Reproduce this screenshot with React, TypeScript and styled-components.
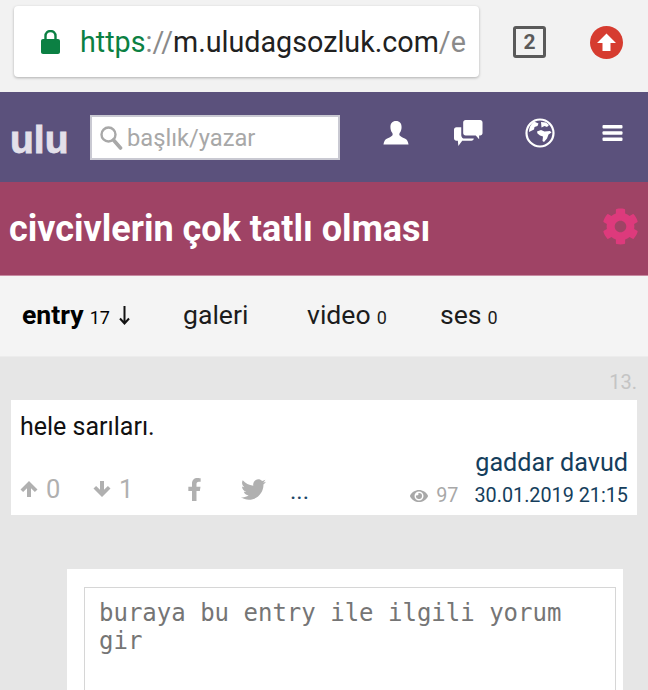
import React from "react";
import styled, { createGlobalStyle } from "styled-components";
import { FaCog, FaEye, FaFacebookF, FaTwitter } from "react-icons/fa";

const Global = createGlobalStyle`
  html, body { margin: 0; padding: 0; background: #e6e6e6; overflow: hidden; }
  body { font-family: Roboto, "Liberation Sans", sans-serif; }
  * { box-sizing: border-box; }
`;

const Page = styled.div`
  width: 648px;
  height: 690px;
  overflow: hidden;
  background: #e6e6e6;
`;

const BrowserBar = styled.div`
  height: 92px;
  background: #f2f2f2;
  padding: 6px 0 0 14px;
  display: flex;
  align-items: flex-start;
`;

const UrlBox = styled.div`
  width: 465px;
  height: 71px;
  background: #fff;
  border-radius: 4px;
  box-shadow: 0 1px 3px rgba(0, 0, 0, 0.28);
  display: flex;
  align-items: center;
  padding: 0 13px 0 27px;
`;

const Url = styled.div`
  margin-left: 20px;
  font-size: 28.7px;
  white-space: nowrap;
  overflow: hidden;
  color: #212121;
  flex: 1;
`;

const Green = styled.span`
  color: #0b8043;
`;

const Faded = styled.span`
  color: #8a8a8a;
`;

const TabCount = styled.div`
  margin: 20px 0 0 34px;
  width: 33px;
  height: 32px;
  border: 3px solid #5a5a5a;
  border-radius: 3px;
  color: #5a5a5a;
  font-size: 21px;
  font-weight: 700;
  display: flex;
  align-items: center;
  justify-content: center;
`;

const UpdateBadge = styled.div`
  margin: 20px 0 0 44px;
  width: 33px;
  height: 33px;
  display: flex;
`;

const Header = styled.header`
  height: 89px;
  background: #5b517c;
  display: flex;
  align-items: flex-start;
  padding: 23px 0 0 10px;
`;

const Logo = styled.div`
  width: 80px;
  margin-top: 5px;
  color: #e3e0ea;
  font-family: "Liberation Sans", Arial, sans-serif;
  font-size: 39px;
  line-height: 40px;
  font-weight: 700;
  -webkit-text-stroke: 0.8px #e3e0ea;
`;

const Search = styled.div`
  width: 250px;
  height: 45px;
  background: #fff;
  border: 2px solid #c9c9d2;
  display: flex;
  align-items: center;
  padding: 0 0 0 7px;
  gap: 4px;
  color: #a8a8a8;
  font-size: 23.7px;
`;

const NavIcon = styled.div<{ $left: number }>`
  margin-left: ${(p) => p.$left}px;
  margin-top: 2px;
  display: flex;
  width: 32px;
  height: 32px;
  justify-content: center;
  align-items: center;
`;

const TitleBar = styled.div`
  height: 95px;
  background: #9f4365;
  border-top: 1px solid #5b517c;
  border-bottom: 1px solid #c78aa1;
  display: flex;
  align-items: center;
  justify-content: space-between;
  padding: 0 9px 0 9px;
`;

const Title = styled.h1`
  margin: 0;
  color: #fff;
  font-size: 36px;
  font-weight: 700;
`;

const Gear = styled(FaCog)`
  margin-bottom: 5px;
`;

const Tabs = styled.nav`
  height: 81px;
  background: #f4f4f4;
  display: flex;
  align-items: center;
  padding: 0 0 3px 22px;
  border-bottom: 1px solid #ececec;
`;

const Tab = styled.div<{ $width: number; $active?: boolean }>`
  width: ${(p) => p.$width}px;
  font-size: 26.6px;
  font-weight: ${(p) => (p.$active ? 700 : 400)};
  color: ${(p) => (p.$active ? "#000" : "#1c1c1c")};
  white-space: nowrap;
  display: flex;
  align-items: baseline;
`;

const Count = styled.span`
  font-size: 18px;
  font-weight: 400;
  margin-left: 6px;
`;

const SortArrow = styled.svg`
  margin-left: 9px;
  align-self: center;
`;

const EntryNumber = styled.div`
  text-align: right;
  padding: 13px 11px 0 0;
  height: 43px;
  color: #c4c4c4;
  font-size: 20px;
`;

const Card = styled.article`
  margin: 0 11px;
  height: 115px;
  background: #fff;
  padding: 12px 9px 0;
`;

const EntryText = styled.div`
  font-size: 25px;
  line-height: 30px;
  color: #111;
`;

const Footer = styled.div`
  display: flex;
  justify-content: space-between;
  align-items: flex-end;
  margin-top: 6px;
`;

const Actions = styled.div`
  display: flex;
  align-items: center;
  color: #b0b0b0;
  font-size: 25.5px;
  height: 32px;
  margin-bottom: 5px;
`;

const Vote = styled.span<{ $width: number }>`
  width: ${(p) => p.$width}px;
  display: flex;
  align-items: center;
  gap: 8px;
`;

const Social = styled.span<{ $width: number }>`
  width: ${(p) => p.$width}px;
  display: flex;
  align-items: center;
`;

const More = styled.span`
  color: #1d4768;
  font-size: 24px;
  margin-top: 4px;
`;

const Meta = styled.div`
  text-align: right;
  color: #153e5c;
`;

const Author = styled.div`
  font-size: 25.2px;
  line-height: 30px;
`;

const Stamp = styled.div`
  display: flex;
  justify-content: flex-end;
  align-items: center;
  font-size: 19.8px;
  line-height: 28px;
  margin-top: 4px;
`;

const Views = styled.span`
  color: #a8a8a8;
  display: flex;
  align-items: center;
  gap: 8px;
  margin-right: 16px;
`;

const Composer = styled.section`
  margin: 54px 25px 0 67px;
  background: #fff;
  padding: 18px 7px 0 17px;
  height: 140px;
`;

const Field = styled.div`
  height: 140px;
  border: 1px solid #d6d6d6;
  padding: 11px 14px;
  font-family: "DejaVu Sans Mono", "Liberation Mono", monospace;
  font-size: 24px;
  line-height: 28px;
  color: #757575;
`;

const LockIcon = () => (
  <svg width="19" height="24" viewBox="0 0 19 24" fill="#0b8043">
    <path d="M2 9h15c1.100 0 2 .9 2 2v11c0 1.100-.9 2-2 2H2c-1.100 0-2-.9-2-2V11c0-1.100.9-2 2-2z" />
    <path d="M4.500 10V6a5 5 0 0 1 10 0v4" fill="none" stroke="#0b8043" strokeWidth="2.400" />
  </svg>
);

const UserIcon = () => (
  <svg width="26" height="26" viewBox="0 0 28 28" fill="#fff">
    <path d="M14 1c-4 0-6 2.700-6 6.500 0 2.500.7 4.700 1.900 6.300.6.900.7 2.200.1 3-.9 1.300-3.700 2.300-6 3.400C2.200 21.100 1 23 .5 26.500h27c-.5-3.500-1.700-5.400-3.500-6.300-2.300-1.100-5.100-2.100-6-3.400-.6-.8-.5-2.100.1-3C19.300 12.200 20 10 20 7.500 20 3.700 18 1 14 1z" />
  </svg>
);

const ChatIcon = () => (
  <svg width="31" height="29" viewBox="0 0 32 30" fill="#fff">
    <path d="M10.500 3.500c0-1.400 1-2.500 2.500-2.500h15c1.500 0 2.500 1.100 2.500 2.500v11c0 1.400-1 2.500-2.500 2.500h-1v4l-3.500-4H13c-1.500 0-2.500-1.100-2.500-2.500z" />
    <path d="M8.500 8.500H3.500C2 8.500 1 9.600 1 11v9c0 1.400 1 2.500 2.500 2.500h1.500L5.500 28l4-5.500H19c1.500 0 2.300-1 2.500-2.300H12c-2 0-3.500-1.500-3.500-3.500z" />
  </svg>
);

const GlobeIcon = () => (
  <svg width="30" height="30" viewBox="0 0 30 30">
    <circle cx="15" cy="15" r="13.500" fill="none" stroke="#fff" strokeWidth="2.200" />
    <path
      fill="#fff"
      d="M9 3.500l4.500 2-1 2.500-3 1-.5 2.500L6 13l-2 1c0-4 1.500-8 5-10.500zM12 13.500l4-1.500 3.500 1.500 5.500-.5 1.500 1.500-3 2-1.500 4-3 3.500-1.500-1 .5-4.500-3-1-2.500-2zM16 4l5 .5 3 2.500-2 2-2.500-1-3 1.500z"
    />
  </svg>
);

const MenuIcon = () => (
  <svg width="21" height="18" viewBox="0 0 21 18" fill="#fff">
    <rect x="0.500" y="1" width="20" height="3.400" rx="1" />
    <rect x="0.500" y="7.300" width="20" height="3.400" rx="1" />
    <rect x="0.500" y="13.600" width="20" height="3.400" rx="1" />
  </svg>
);

const SearchIcon = () => (
  <svg width="24" height="26" viewBox="0 0 24 26" fill="none" stroke="#a8a8a8">
    <circle cx="9.500" cy="9.500" r="7" strokeWidth="2.400" />
    <path d="M14.500 15l7 8" strokeWidth="3.600" strokeLinecap="round" />
  </svg>
);

const UpdateIcon = () => (
  <svg width="33" height="33" viewBox="0 0 33 33">
    <circle cx="16.500" cy="16.500" r="16.500" fill="#d63c30" />
    <path fill="#fff" d="M16.500 7.500L26 17h-5.500v8h-8v-8H7z" />
  </svg>
);

const UpArrow = () => (
  <svg width="18" height="18" viewBox="0 0 18 18" fill="#b0b0b0">
    <path d="M9 1l8.500 8.500-2.600 2.600-3.900-3.900V17H7V8.200l-3.900 3.900L.5 9.500z" />
  </svg>
);

const DownArrow = () => (
  <svg width="18" height="18" viewBox="0 0 18 18" fill="#b0b0b0">
    <path d="M9 17L.5 8.500l2.600-2.600L7 9.800V1h4v8.800l3.900-3.900 2.600 2.600z" />
  </svg>
);

export default function App() {
  return (
    <Page>
      <Global />
      <BrowserBar>
        <UrlBox>
          <LockIcon />
          <Url>
            <Green>https</Green>
            <Faded>://</Faded>m.uludagsozluk.com<Faded>/e</Faded>
          </Url>
        </UrlBox>
        <TabCount>2</TabCount>
        <UpdateBadge>
          <UpdateIcon />
        </UpdateBadge>
      </BrowserBar>
      <Header>
        <Logo>ulu</Logo>
        <Search>
          <SearchIcon />
          başlık/yazar
        </Search>
        <NavIcon $left={40}><UserIcon /></NavIcon>
        <NavIcon $left={40}><ChatIcon /></NavIcon>
        <NavIcon $left={40}><GlobeIcon /></NavIcon>
        <NavIcon $left={40}><MenuIcon /></NavIcon>
      </Header>
      <TitleBar>
        <Title>civcivlerin çok tatlı olması</Title>
        <Gear size={37} color="#dd3a7c" />
      </TitleBar>
      <Tabs>
        <Tab $width={161} $active>
          entry<Count>17</Count>
          <SortArrow width="11" height="20" viewBox="0 0 11 20" fill="none" stroke="#111">
            <path d="M5.500 1v17M1 13.500l4.500 5 4.500-5" strokeWidth="2" />
          </SortArrow>
        </Tab>
        <Tab $width={124}>galeri</Tab>
        <Tab $width={133}>
          video<Count>0</Count>
        </Tab>
        <Tab $width={80}>
          ses<Count>0</Count>
        </Tab>
      </Tabs>
      <EntryNumber>13.</EntryNumber>
      <Card>
        <EntryText>hele sarıları.</EntryText>
        <Footer>
          <Actions>
            <Vote $width={73}><UpArrow />0</Vote>
            <Vote $width={90}><DownArrow />1</Vote>
            <Social $width={58}><FaFacebookF size={23} /></Social>
            <Social $width={49}><FaTwitter size={25} /></Social>
            <More>...</More>
          </Actions>
          <Meta>
            <Author>gaddar davud</Author>
            <Stamp>
              <Views><FaEye size={18} />97</Views>
              30.01.2019 21:15
            </Stamp>
          </Meta>
        </Footer>
      </Card>
      <Composer>
        <Field>buraya bu entry ile ilgili yorum gir</Field>
      </Composer>
    </Page>
  );
}
